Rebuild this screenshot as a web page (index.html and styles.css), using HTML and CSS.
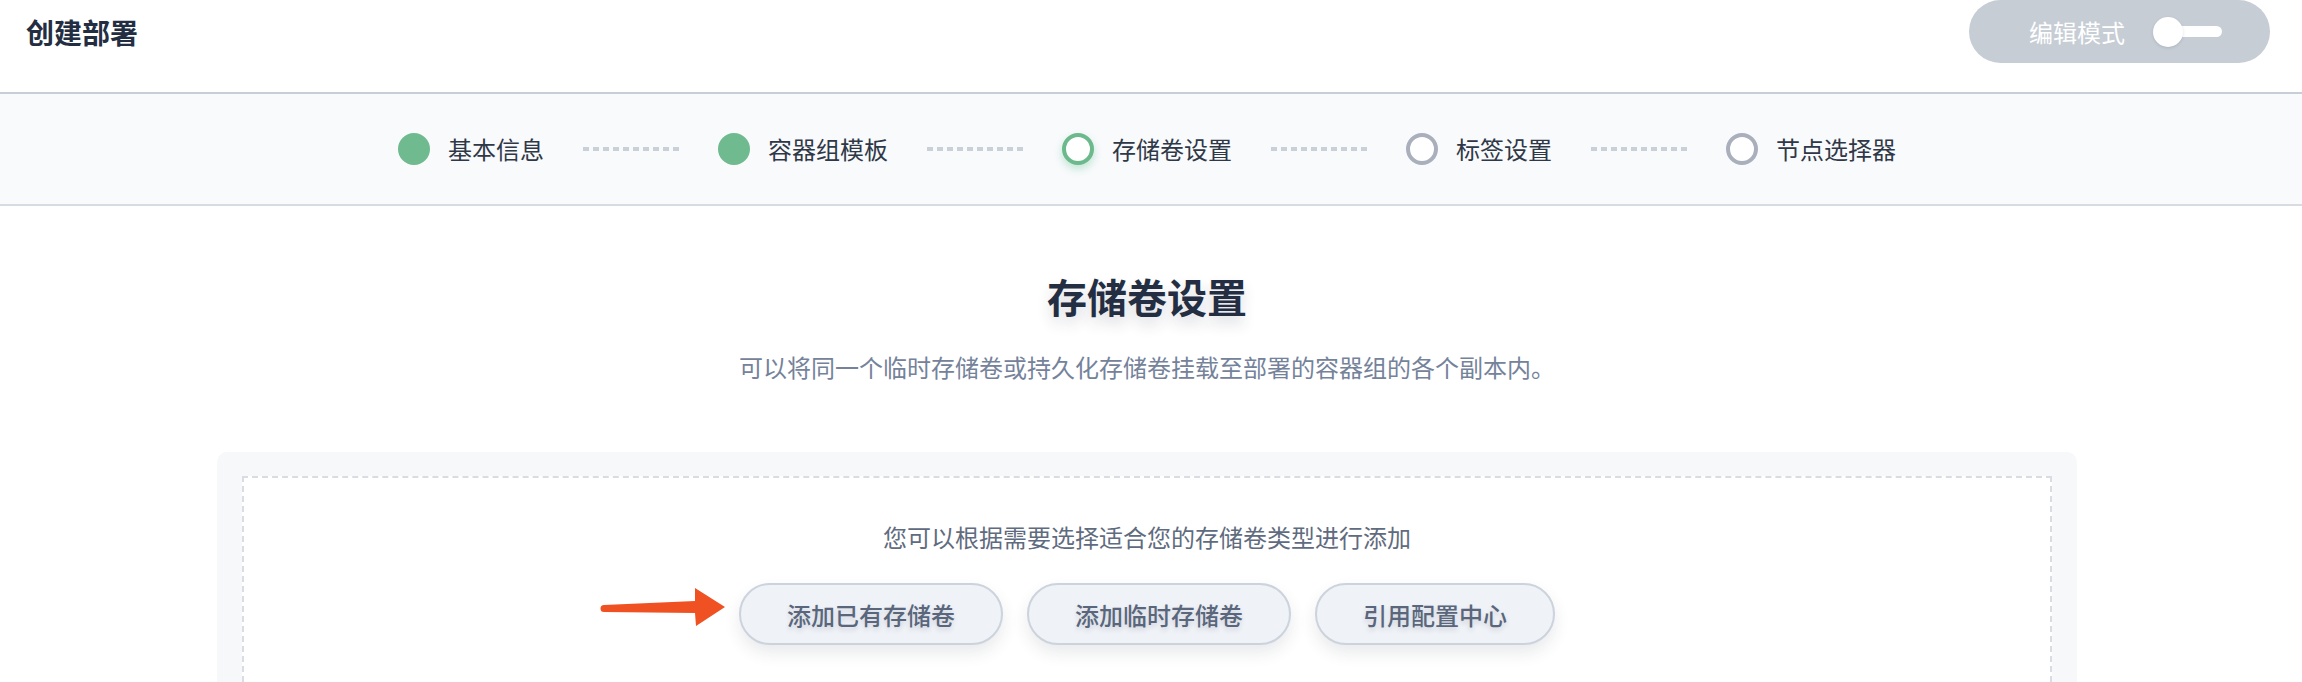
FILE: index.html
```html
<!DOCTYPE html>
<html lang="zh-CN">
<head>
<meta charset="utf-8">
<title>创建部署</title>
<link rel="stylesheet" href="styles.css">
</head>
<body>
<header class="header">
  <h1 class="title">创建部署</h1>
  <div class="mode-pill">
    <span class="mode-text">编辑模式</span>
    <span class="toggle"><span class="toggle-knob"></span></span>
  </div>
</header>
<nav class="stepper">
  <div class="step done"><span class="dot"></span><span class="step-label">基本信息</span></div>
  <span class="dash"></span>
  <div class="step done"><span class="dot"></span><span class="step-label">容器组模板</span></div>
  <span class="dash"></span>
  <div class="step active"><span class="dot"></span><span class="step-label">存储卷设置</span></div>
  <span class="dash"></span>
  <div class="step"><span class="dot"></span><span class="step-label">标签设置</span></div>
  <span class="dash"></span>
  <div class="step"><span class="dot"></span><span class="step-label">节点选择器</span></div>
</nav>
<main class="main">
  <h2 class="heading">存储卷设置</h2>
  <p class="subtitle">可以将同一个临时存储卷或持久化存储卷挂载至部署的容器组的各个副本内。</p>
  <section class="card">
    <div class="dropzone">
      <p class="hint">您可以根据需要选择适合您的存储卷类型进行添加</p>
      <div class="actions">
        <svg class="arrow" width="126" height="40" viewBox="0 0 126 40" aria-hidden="true">
          <path d="M4 18 L95 14 L95 1 L125 20 L96 39 L95 26 L4 25 A3.5 3.5 0 0 1 4 18 Z" fill="#f05123"/>
        </svg>
        <button class="btn">添加已有存储卷</button>
        <button class="btn">添加临时存储卷</button>
        <button class="btn">引用配置中心</button>
      </div>
    </div>
  </section>
</main>
</body>
</html>
```
FILE: styles.css
```css
* { box-sizing: border-box; }
html, body { margin: 0; padding: 0; }
body {
  font-family: "Noto Sans CJK SC", "Noto Sans", sans-serif;
  background: #ffffff;
  color: #242e42;
  overflow: hidden;
}
.header {
  height: 94px;
  display: flex;
  justify-content: space-between;
  align-items: flex-start;
  padding: 0 32px 0 26px;
  border-bottom: 2px solid #c7ced6;
}
.title {
  margin: 0;
  font-size: 28px;
  line-height: 64px;
  font-weight: 700;
  color: #242e42;
}
.mode-pill {
  height: 63px;
  border-radius: 32px;
  background: #c6cdd5;
  display: flex;
  align-items: center;
  flex-shrink: 0;
  white-space: nowrap;
  padding: 0 48px 0 60px;
}
.mode-text {
  font-size: 24px;
  color: #ffffff;
  line-height: 1;
}
.toggle {
  position: relative;
  margin-left: 28px;
  width: 69px;
  height: 30px;
  display: flex;
  align-items: center;
  flex-shrink: 0;
}
.toggle::before {
  content: "";
  display: block;
  margin-left: 15px;
  width: 54px;
  height: 11px;
  border-radius: 6px;
  background: #ffffff;
}
.toggle-knob {
  position: absolute;
  left: 0;
  top: 0;
  width: 30px;
  height: 30px;
  border-radius: 50%;
  background: #ffffff;
  box-shadow: 0 1px 3px rgba(36,46,66,0.15);
}
.stepper {
  height: 112px;
  background: #f9fafc;
  border-bottom: 2px solid #d7dce3;
  display: flex;
  justify-content: center;
  align-items: center;
  gap: 39px;
  padding-right: 8px;
}
.step {
  display: flex;
  align-items: center;
  gap: 18px;
}
.dot {
  width: 32px;
  height: 32px;
  border-radius: 50%;
  border: 4px solid #a9b0bc;
  background: #ffffff;
}
.step.done .dot {
  background: #6fba8f;
  border-color: #6fba8f;
}
.step.active .dot {
  border-color: #6cb98c;
  background: #ffffff;
  box-shadow: 0 4px 8px rgba(85,188,138,0.35);
}
.step-label {
  font-size: 24px;
  line-height: 34px;
  color: #2f3847;
}
.dash {
  width: 96px;
  height: 4px;
  background: repeating-linear-gradient(90deg, #cad0d8 0 6px, transparent 6px 10px);
}
.main {
  padding: 62px 8px 0 0;
  display: flex;
  flex-direction: column;
  align-items: center;
}
.heading {
  margin: 0;
  font-size: 40px;
  line-height: 56px;
  font-weight: 700;
  color: #242e42;
  text-shadow: 0 8px 14px rgba(36,46,66,0.16);
}
.subtitle {
  margin: 26px 0 0;
  font-size: 24px;
  line-height: 34px;
  color: #74829a;
}
.card {
  margin: 68px 0 0;
  width: 1860px;
  height: 400px;
  background: #f7f8fa;
  border-radius: 10px;
  padding: 24px 25px 0 25px;
}
.dropzone {
  height: 100%;
  background: #ffffff;
  border: 2px dashed #d9dde3;
  border-bottom: none;
  display: flex;
  flex-direction: column;
  align-items: center;
  padding-top: 42px;
}
.hint {
  margin: 0;
  font-size: 24px;
  line-height: 34px;
  color: #5f6b7e;
}
.actions {
  position: relative;
  margin-top: 29px;
  display: flex;
  gap: 24px;
}
.arrow {
  position: absolute;
  right: calc(100% + 13px);
  top: 4px;
}
.btn {
  height: 62px;
  padding: 0 46px;
  border: 2px solid #ccd3dc;
  border-radius: 31px;
  background: #eff2f7;
  font-family: inherit;
  font-size: 24px;
  font-weight: 500;
  color: #59667b;
  box-shadow: 0 8px 16px rgba(36,46,66,0.10);
  text-shadow: 0 3px 5px rgba(36,46,66,0.15);
  cursor: pointer;
}
```
